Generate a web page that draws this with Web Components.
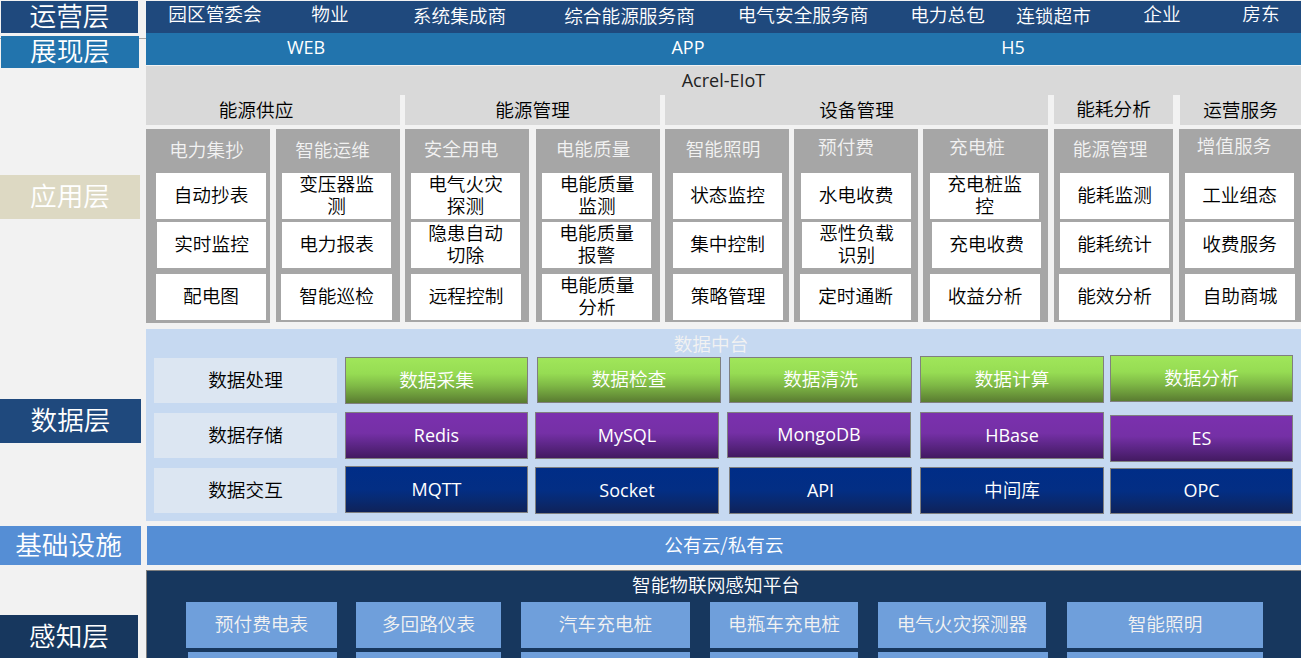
<!DOCTYPE html>
<html lang="zh">
<head>
<meta charset="utf-8">
<title>Acrel-EIoT</title>
<style>
html,body{margin:0;padding:0;height:658px;overflow:hidden;background:#f2f2f2}
body{font-family:"Noto Sans CJK SC","Noto Sans",sans-serif;font-size:18.67px;font-weight:350;line-height:22px;color:#000}
</style>
</head>
<body>
<arch-page>
  <layer-rail slot="rail">
    <layer-label style="--bg:#1f497d;--w:137px;--h:32px;--ml:1px;--mt:1px;--pb:4px">运营层</layer-label>
    <layer-label style="--bg:#2274ad;--w:138px;--h:32px;--ml:1px;--mt:3px;--pb:4px">展现层</layer-label>
    <layer-label style="--bg:#ddd9c3;--w:140px;--h:44px;--mt:107px;--pb:4px">应用层</layer-label>
    <layer-label style="--bg:#1f497d;--w:141px;--h:44px;--mt:180px;--pb:4px">数据层</layer-label>
    <layer-label style="--bg:#558ed5;--w:141px;--h:39px;--mt:83px;--pb:4px;--pr:4px">基础设施</layer-label>
    <layer-label style="--bg:#17375e;--w:138px;--h:43px;--mt:50px;--pb:4px">感知层</layer-label>
  </layer-rail>

  <arch-bar style="--bg:#1f497d;--h:32px;--mt:1px;--cols:138px 92px 167px 173px 174px 115px 97px 120px 78px">
    <bar-item style="--dy:1px">园区管委会</bar-item>
    <bar-item style="--dy:1px">物业</bar-item>
    <bar-item style="--dy:3px">系统集成商</bar-item>
    <bar-item style="--dy:3px">综合能源服务商</bar-item>
    <bar-item style="--dy:2px">电气安全服务商</bar-item>
    <bar-item style="--dy:2px">电力总包</bar-item>
    <bar-item style="--dy:3px">连锁超市</bar-item>
    <bar-item style="--dy:1px">企业</bar-item>
    <bar-item style="--dy:1px">房东</bar-item>
  </arch-bar>
  <arch-bar style="--bg:#2274ad;--h:32px;--cols:320px 444px 206px 1fr">
    <bar-item style="--dy:2px"><latin-text>WEB</latin-text></bar-item>
    <bar-item style="--dy:2px"><latin-text>APP</latin-text></bar-item>
    <bar-item style="--dy:2px"><latin-text>H5</latin-text></bar-item>
  </arch-bar>

  <app-band>
    <latin-text slot="title">Acrel-EIoT</latin-text>
    <group-head style="--w:254px;--pr:34px">能源供应</group-head>
    <group-head style="--w:255px;--ml:5px">能源管理</group-head>
    <group-head style="--w:383px;--ml:5px">设备管理</group-head>
    <group-head style="--w:119px;--ml:6px;--h:29px;--dy:-1px">能耗分析</group-head>
    <group-head style="--w:121px;--ml:7px">运营服务</group-head>
  </app-band>

  <card-row>
    <func-card style="--w:124px;--h:194px;--tx:3px;--ty:9px">
      <span slot="title">电力集抄</span>
      <cell-box style="--x:10px;--w:110px">自动抄表</cell-box>
      <cell-box style="--x:11px;--w:109px">实时监控</cell-box>
      <cell-box style="--x:10px;--w:110px">配电图</cell-box>
    </func-card>
    <func-card style="--w:124px;--ml:6px;--tx:11px;--ty:9px">
      <span slot="title">智能运维</span>
      <cell-box style="--x:6px;--w:109px">变压器监测</cell-box>
      <cell-box style="--x:6px;--w:109px">电力报表</cell-box>
      <cell-box style="--x:5px;--w:111px">智能巡检</cell-box>
    </func-card>
    <func-card style="--w:124px;--ml:5px;--tx:12px;--ty:8px">
      <span slot="title">安全用电</span>
      <cell-box style="--x:6px;--w:109px">电气火灾探测</cell-box>
      <cell-box style="--x:6px;--w:109px">隐患自动切除</cell-box>
      <cell-box style="--x:6px;--w:110px">远程控制</cell-box>
    </func-card>
    <func-card style="--w:124px;--ml:7px;--tx:10px;--ty:8px">
      <span slot="title">电能质量</span>
      <cell-box style="--x:6px;--w:110px">电能质量监测</cell-box>
      <cell-box style="--x:6px;--w:109px">电能质量报警</cell-box>
      <cell-box style="--x:6px;--w:110px">电能质量分析</cell-box>
    </func-card>
    <func-card style="--w:124px;--ml:5px;--tx:8px;--ty:8px">
      <span slot="title">智能照明</span>
      <cell-box style="--x:8px;--w:109px">状态监控</cell-box>
      <cell-box style="--x:8px;--w:109px">集中控制</cell-box>
      <cell-box style="--x:8px;--w:110px">策略管理</cell-box>
    </func-card>
    <func-card style="--w:124px;--ml:5px;--tx:20px;--ty:6px">
      <span slot="title">预付费</span>
      <cell-box style="--x:7px;--w:110px">水电收费</cell-box>
      <cell-box style="--x:8px;--w:109px">恶性负载识别</cell-box>
      <cell-box style="--x:6px;--w:111px">定时通断</cell-box>
    </func-card>
    <func-card style="--w:125px;--ml:5px;--tx:17px;--ty:6px">
      <span slot="title">充电桩</span>
      <cell-box style="--x:7px;--w:109px">充电桩监控</cell-box>
      <cell-box style="--x:9px;--w:109px">充电收费</cell-box>
      <cell-box style="--x:7px;--w:110px">收益分析</cell-box>
    </func-card>
    <func-card style="--w:119px;--ml:6px;--tx:7px;--ty:8px">
      <span slot="title">能源管理</span>
      <cell-box style="--x:6px;--w:109px">能耗监测</cell-box>
      <cell-box style="--x:6px;--w:109px">能耗统计</cell-box>
      <cell-box style="--x:5px;--w:111px">能效分析</cell-box>
    </func-card>
    <func-card style="--w:122px;--ml:6px;--tx:12px;--ty:5px">
      <span slot="title">增值服务</span>
      <cell-box style="--x:6px;--w:109px">工业组态</cell-box>
      <cell-box style="--x:6px;--w:109px">收费服务</cell-box>
      <cell-box style="--x:6px;--w:110px">自助商城</cell-box>
    </func-card>
  </card-row>

  <data-panel>
    <span slot="title">数据中台</span>
    <data-label>数据处理</data-label>
    <data-btn kind="green" style="--w:183px;--h:47px;--dy:-1px">数据采集</data-btn>
    <data-btn kind="green" style="--w:184px;--h:46px;--dx:2px;--dy:-1px">数据检查</data-btn>
    <data-btn kind="green" style="--w:183px;--h:46px;--dx:2px;--dy:-1px">数据清洗</data-btn>
    <data-btn kind="green" style="--w:184px;--h:47px;--dy:-2px">数据计算</data-btn>
    <data-btn kind="green" style="--w:183px;--h:47px;--dy:-3px">数据分析</data-btn>

    <data-label>数据存储</data-label>
    <data-btn kind="purple" style="--w:183px;--h:47px;--dy:-1px"><latin-text>Redis</latin-text></data-btn>
    <data-btn kind="purple" style="--w:184px;--h:47px;--dy:-1px"><latin-text>MySQL</latin-text></data-btn>
    <data-btn kind="purple" style="--w:184px;--h:46px;--dy:-1px"><latin-text>MongoDB</latin-text></data-btn>
    <data-btn kind="purple" style="--w:184px;--h:47px;--dy:-1px"><latin-text>HBase</latin-text></data-btn>
    <data-btn kind="purple" style="--w:183px;--h:47px;--dy:2px"><latin-text>ES</latin-text></data-btn>

    <data-label>数据交互</data-label>
    <data-btn kind="navy" style="--w:183px;--h:47px;--dy:-2px"><latin-text>MQTT</latin-text></data-btn>
    <data-btn kind="navy" style="--w:184px;--h:47px;--dy:-1px"><latin-text>Socket</latin-text></data-btn>
    <data-btn kind="navy" style="--w:183px;--h:47px;--dx:2px;--dy:-1px"><latin-text>API</latin-text></data-btn>
    <data-btn kind="navy" style="--w:184px;--h:47px;--dy:-1px;--pb:4px">中间库</data-btn>
    <data-btn kind="navy" style="--w:183px;--h:46px"><latin-text>OPC</latin-text></data-btn>
  </data-panel>

  <arch-bar style="--bg:#558ed5;--h:39px;--mt:5px;--ml:1px;--cols:1fr">
    <bar-item style="--dy:7px">公有云/私有云</bar-item>
  </arch-bar>

  <sense-panel>
    <span slot="title">智能物联网感知平台</span>
    <sense-tile style="--w:151px">预付费电表</sense-tile>
    <sense-tile style="--w:145px">多回路仪表</sense-tile>
    <sense-tile style="--w:169px">汽车充电桩</sense-tile>
    <sense-tile style="--w:148px">电瓶车充电桩</sense-tile>
    <sense-tile style="--w:168px">电气火灾探测器</sense-tile>
    <sense-tile style="--w:196px">智能照明</sense-tile>
    <sense-tile style="--w:149px;--dx:2px"></sense-tile>
    <sense-tile style="--w:145px"></sense-tile>
    <sense-tile style="--w:169px"></sense-tile>
    <sense-tile style="--w:148px"></sense-tile>
    <sense-tile style="--w:170px"></sense-tile>
    <sense-tile style="--w:196px"></sense-tile>
  </sense-panel>
</arch-page>

<script>
function def(name, css, html){
  const tpl = document.createElement('template');
  tpl.innerHTML = '<style>' + css + '</style>' + (html || '<slot></slot>');
  customElements.define(name, class extends HTMLElement{
    constructor(){
      super();
      this.attachShadow({mode:'open'}).appendChild(tpl.content.cloneNode(true));
    }
  });
}

def('arch-page',
  ':host{display:grid;grid-template-columns:146px 1fr;width:1301px;height:658px;overflow:hidden;background:linear-gradient(#a6a6a6,#a6a6a6) 0 38px/146px 1px no-repeat}' +
  '.main{display:flex;flex-direction:column;min-width:0}',
  '<slot name="rail"></slot><div class="main"><slot></slot></div>');

def('layer-rail', ':host{display:flex;flex-direction:column}');

def('layer-label',
  ':host{display:flex;align-items:center;justify-content:center;flex:none;box-sizing:border-box;width:var(--w);height:var(--h);margin-left:var(--ml,0);margin-top:var(--mt,0);padding-bottom:var(--pb,0);padding-right:var(--pr,0);background:var(--bg);color:#fff;font-size:26.67px;line-height:28px}');

def('arch-bar',
  ':host{display:grid;flex:none;grid-template-columns:var(--cols);height:var(--h);margin-top:var(--mt,0);margin-left:var(--ml,0);background:var(--bg);color:#fff}');

def('bar-item', ':host{display:block;text-align:center;margin-top:var(--dy,0);white-space:nowrap}');

def('latin-text', ':host{display:inline;font-family:"Open Sans","Noto Sans",sans-serif;font-size:18px;font-weight:400}');

def('app-band',
  ':host{display:block;flex:none;margin-top:1px}' +
  '.title{height:29px;background:#d9d9d9;text-align:center;padding-top:2px;box-sizing:border-box;line-height:22px;color:#222}' +
  '.groups{display:flex;height:30px}',
  '<div class="title"><slot name="title"></slot></div><div class="groups"><slot></slot></div>');

def('group-head',
  ':host{display:block;flex:none;box-sizing:border-box;width:var(--w);height:var(--h,30px);margin-left:var(--ml,0);padding-right:var(--pr,0);padding-top:calc(3px + var(--dy,0px));background:#d9d9d9;text-align:center;color:#000}');

def('card-row', ':host{display:flex;flex:none;margin-top:4px;align-items:flex-start}');

def('func-card',
  ':host{display:block;flex:none;box-sizing:border-box;width:var(--w);height:var(--h,193px);margin-left:var(--ml,0);background:#a6a6a6}' +
  '.title{box-sizing:border-box;height:44px;padding-top:var(--ty);padding-right:var(--tx);text-align:center;color:#f2f2f2;white-space:nowrap}' +
  '::slotted(cell-box:nth-of-type(2)){margin-top:3px}' +
  '::slotted(cell-box:nth-of-type(3)){margin-top:6px}',
  '<div class="title"><slot name="title"></slot></div><slot></slot>');

def('cell-box',
  ':host{display:flex;align-items:center;justify-content:center;box-sizing:border-box;width:var(--w);height:46px;margin-left:var(--x);padding-bottom:4px;background:#fff;color:#000;text-align:center}' +
  '.in{display:block;max-width:80px}',
  '<span class="in"><slot></slot></span>');

def('data-panel',
  ':host{display:block;flex:none;margin-top:6px;height:192px;background:#c6d9f1}' +
  '.title{height:29px;box-sizing:border-box;padding-top:3px;line-height:22px;text-align:center;padding-right:25px;color:#f2f2f2}' +
  '.grid{display:grid;grid-template-columns:191px 190px 192px 193px 190px 191px;grid-auto-rows:55px;padding-left:8px}',
  '<div class="title"><slot name="title"></slot></div><div class="grid"><slot></slot></div>');

def('data-label',
  ':host{display:flex;align-items:center;justify-content:center;box-sizing:border-box;width:183px;height:45px;padding-bottom:3px;background:#dce6f2;color:#000}');

const grads = {
  green:'linear-gradient(#a0e65a 0%,#96dc53 35%,#7fb946 62%,#5a7c31 100%)',
  purple:'linear-gradient(#7b30ae 0%,#7530a6 45%,#5f278a 68%,#431a61 100%)',
  navy:'linear-gradient(#002d87 0%,#032e84 50%,#082a72 72%,#0f2259 100%)'
};
class DataBtn extends HTMLElement{
  constructor(){
    super();
    const kind = this.getAttribute('kind') || 'green';
    const pb = kind === 'green' ? '4px' : '2px';
    const r = this.attachShadow({mode:'open'});
    r.innerHTML = '<style>:host{display:flex;align-items:center;justify-content:center;box-sizing:border-box;' +
      'width:var(--w);height:var(--h);margin-left:var(--dx,0);margin-top:var(--dy,0);padding-bottom:var(--pb,' + pb + ');border:1px solid #7f7f7f;' +
      'background:' + grads[kind] + ';color:#fff}</style><slot></slot>';
  }
}
customElements.define('data-btn', DataBtn);

def('sense-panel',
  ':host{display:block;flex:none;box-sizing:border-box;margin-top:5px;height:88px;border-top:1px solid #7f7f7f;border-left:1px solid #7f7f7f;background:#17375e}' +
  '.title{height:31px;padding-top:2px;box-sizing:border-box;line-height:22px;text-align:center;color:#fff;padding-right:16px}' +
  '.grid{display:grid;grid-template-columns:170px 165px 189px 168px 189px 196px;grid-auto-rows:50px;padding-left:39px}',
  '<div class="title"><slot name="title"></slot></div><div class="grid"><slot></slot></div>');

def('sense-tile',
  ':host{display:flex;align-items:center;justify-content:center;box-sizing:border-box;width:var(--w);height:46px;margin-left:var(--dx,0);padding-bottom:4px;background:#6f9fdb;color:#f2f2f2}');
</script>
</body>
</html>
